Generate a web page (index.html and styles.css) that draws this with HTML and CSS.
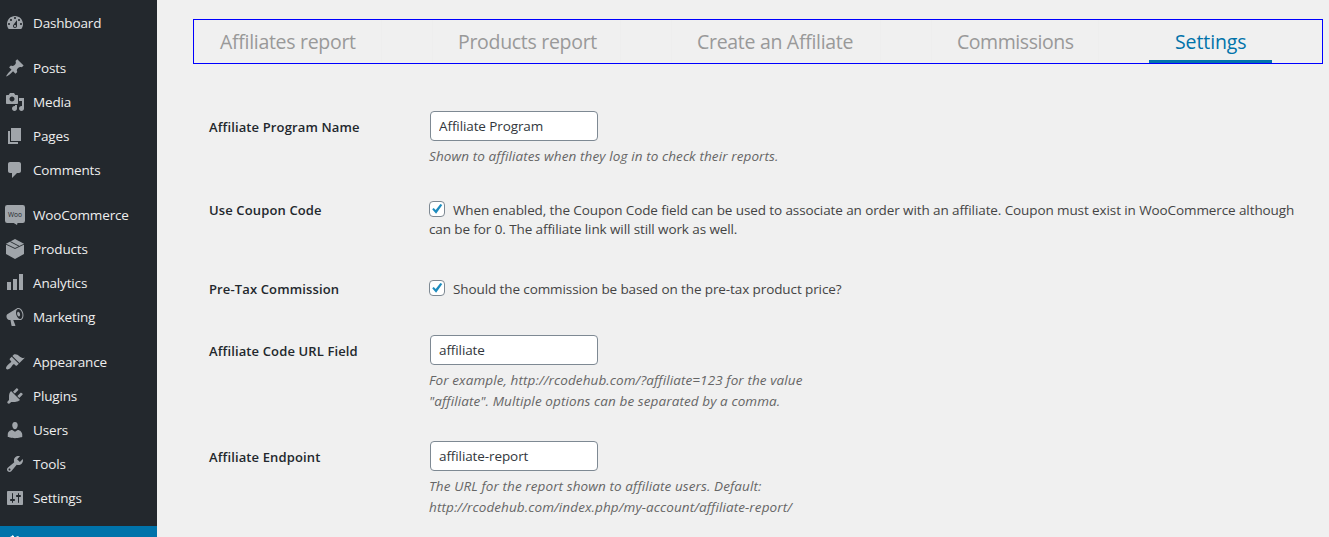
FILE: index.html
```
<!DOCTYPE html>
<html lang="en">
<head>
<meta charset="utf-8">
<title>Affiliate Settings</title>
<link rel="stylesheet" href="styles.css">
</head>
<body>
<div class="layout">
  <nav class="sidebar">
    <ul class="menu">
      <li class="item"><svg class="icon" viewBox="0 0 20 20"><path fill-rule="evenodd" d="M3.76 16h12.48c1.1-1.37 1.76-3.11 1.76-5 0-4.42-3.58-8-8-8s-8 3.58-8 8c0 1.89.66 3.63 1.76 5zM10 4c.55 0 1 .45 1 1s-.45 1-1 1-1-.45-1-1 .45-1 1-1zM6 6c.55 0 1 .45 1 1s-.45 1-1 1-1-.45-1-1 .45-1 1-1zm8 0c.55 0 1 .45 1 1s-.45 1-1 1-1-.45-1-1 .45-1 1-1zm-5.37 5.55L12 7v6c0 1.1-.9 2-2 2s-2-.9-2-2c0-.57.24-1.08.63-1.45zM4 10c.55 0 1 .45 1 1s-.45 1-1 1-1-.45-1-1 .45-1 1-1zm12 0c.55 0 1 .45 1 1s-.45 1-1 1-1-.45-1-1 .45-1 1-1zm-5 3c0-.55-.45-1-1-1s-1 .45-1 1 .45 1 1 1 1-.45 1-1z"/></svg><span>Dashboard</span></li>
    </ul>
    <ul class="menu">
      <li class="item"><svg class="icon" viewBox="0 0 20 20"><path d="M10.44 3.02l1.82-1.82 6.36 6.35-1.83 1.82c-1.05-.68-2.48-.57-3.41.36l-.75.75c-.92.93-1.04 2.35-.35 3.41l-1.83 1.82-2.41-2.41-2.8 2.79c-.42.42-3.38 2.71-3.8 2.29s1.86-3.39 2.28-3.81l2.79-2.79L4.1 9.36l1.83-1.82c1.05.69 2.48.57 3.4-.36l.75-.75c.93-.92 1.05-2.35.36-3.41z"/></svg><span>Posts</span></li>
      <li class="item"><svg class="icon" viewBox="0 0 20 20"><path fill-rule="evenodd" d="M13 11V4c0-.55-.45-1-1-1h-1.67L9 1H5L3.67 3H2c-.55 0-1 .45-1 1v7c0 .55.45 1 1 1h10c.55 0 1-.45 1-1zM7 4.5c1.38 0 2.5 1.12 2.5 2.5S8.38 9.5 7 9.5 4.5 8.38 4.5 7 5.62 4.5 7 4.5zM14 6h5v10.5c0 1.38-1.12 2.5-2.5 2.5S14 17.88 14 16.5s1.12-2.5 2.5-2.5c.17 0 .34.02.5.05V9h-3V6zm-4 8.05V13h2v3.5c0 1.38-1.12 2.5-2.5 2.5S7 17.88 7 16.5 8.12 14 9.5 14c.17 0 .34.02.5.05z"/></svg><span>Media</span></li>
      <li class="item"><svg class="icon" viewBox="0 0 20 20"><path d="M6 15V2h10v13H6zm-1 1h8v2H3V5h2v11z"/></svg><span>Pages</span></li>
      <li class="item"><svg class="icon" viewBox="0 0 20 20"><path d="M5 2h9c1.1 0 2 .9 2 2v7c0 1.1-.9 2-2 2h-2l-5 5v-5H5c-1.1 0-2-.9-2-2V4c0-1.1.9-2 2-2z"/></svg><span>Comments</span></li>
    </ul>
    <ul class="menu">
      <li class="item"><svg class="icon" viewBox="0 0 20 20"><path d="M2.200 0h15.600Q20 0 20 2.200v13.600Q20 18 17.800 18H12.500l-.5 2L8.700 18H2.200Q0 18 0 15.800V2.200Q0 0 2.200 0z"/><text class="woo" x="10" y="11.500" text-anchor="middle" textLength="14" lengthAdjust="spacingAndGlyphs">Woo</text></svg><span>WooCommerce</span></li>
      <li class="item"><svg class="icon" viewBox="0 0 20 20"><path d="M10 0l9 4.700v10.300L10 20l-9-5V4.700z"/><path class="cut" d="M1 5.200l9 4.300 9-4.300M5.300 2.600l8.800 4.600"/></svg><span>Products</span></li>
      <li class="item"><svg class="icon" viewBox="0 0 20 20"><path d="M18 17V1h-4v16h4zm-6 0V6H8v11h4zm-6 0V9H2v8h4z"/></svg><span>Analytics</span></li>
      <li class="item"><svg class="icon" viewBox="0 0 20 20"><path fill-rule="evenodd" d="M18.150 5.940c.46 1.620.38 3.220-.02 4.480-.42 1.280-1.260 2.180-2.300 2.480-.16.06-.26.06-.4.06-.06.02-.12.02-.18.02-.06.02-.14.02-.22.02h-6.800l2.220 5.500c.02.14-.06.26-.14.34-.08.1-.24.16-.34.16H6.950c-.1 0-.26-.06-.34-.16-.08-.08-.16-.2-.14-.34l-1-5.500H4.250l-.02-.02c-.5.06-1.080-.18-1.540-.62s-.88-1.080-1.060-1.880c-.24-.8-.2-1.560-.02-2.200.18-.62.58-1.080 1.060-1.300l.02-.02 9-5.400c.1-.06.18-.1.24-.16.06-.04.14-.08.24-.12.16-.08.28-.12.5-.18 1.040-.3 2.240.1 3.220.98s1.840 2.240 2.260 3.860zm-2.580 5.980h-.02c.4-.1.74-.34 1.040-.7.58-.7.86-1.760.86-3.040 0-.64-.1-1.300-.28-1.980-.34-1.360-1.020-2.500-1.780-3.240s-1.680-1.100-2.460-.88c-.82.22-1.400.96-1.700 2-.32 1.040-.28 2.360.06 3.720.38 1.360 1 2.500 1.800 3.240.78.74 1.620 1.100 2.480.88zm-2.540-7.080c.22-.04.42-.02.62.04.38.16.76.48 1.020 1s.42 1.200.42 1.780c0 .3-.04.56-.12.8-.18.48-.44.84-.86.94-.34.1-.8-.06-1.140-.4s-.64-.86-.78-1.500c-.18-.62-.12-1.240.02-1.720s.48-.84.82-.94z"/></svg><span>Marketing</span></li>
    </ul>
    <ul class="menu">
      <li class="item"><svg class="icon" viewBox="0 0 20 20"><path d="M14.480 11.060L7.410 3.990l1.500-1.500c.5-.56 2.300-.47 3.510.32 1.210.8 1.430 1.280 2.910 2.100 1.180.64 2.450 1.260 4.450.85zm-.71.71L6.700 4.700 4.930 6.470c-.39.39-.39 1.020 0 1.410l1.060 1.060c.39.39.39 1.030 0 1.420-.6.6-1.430 1.110-2.210 1.690-.35.26-.7.53-1.010.84C1.430 14.230.4 16.080 1.400 17.070c.99 1 2.840-.03 4.180-1.360.31-.31.58-.66.85-1.020.57-.78 1.080-1.610 1.690-2.210.39-.39 1.020-.39 1.410 0l1.060 1.060c.39.39 1.020.39 1.410 0z"/></svg><span>Appearance</span></li>
      <li class="item"><svg class="icon" viewBox="0 0 20 20"><path d="M13.110 4.360L9.870 7.600 8 5.730l3.240-3.240c.35-.34 1.050-.2 1.560.32.52.51.66 1.210.31 1.550zm-8 1.770l.91-1.120 9.010 9.010-1.190.84c-.71.71-2.630 1.160-3.820 1.160H6.140L4.900 17.260c-.59.59-1.540.59-2.120 0-.59-.58-.59-1.530 0-2.120l1.240-1.240v-3.880c0-1.130.4-3.190 1.090-3.890zm7.260 3.970l3.240-3.240c.34-.35 1.040-.21 1.550.31.52.51.66 1.210.31 1.550l-3.240 3.250z"/></svg><span>Plugins</span></li>
      <li class="item"><svg class="icon" viewBox="0 0 20 20"><path d="M10 9.250c-2.270 0-2.730-3.440-2.730-3.440C7 4.020 7.820 2 9.970 2c2.160 0 2.980 2.020 2.710 3.810 0 0-.41 3.440-2.680 3.440zm0 2.570L12.720 10c2.390 0 4.520 2.330 4.520 4.530v2.490s-3.650 1.130-7.240 1.130c-3.650 0-7.240-1.130-7.240-1.130v-2.490c0-2.250 1.940-4.480 4.470-4.480z"/></svg><span>Users</span></li>
      <li class="item"><svg class="icon" viewBox="0 0 20 20"><path fill-rule="evenodd" d="M16.680 9.770c-1.340 1.340-3.300 1.670-4.950.99l-5.410 6.520c-.99.99-2.590.99-3.580 0s-.99-2.590 0-3.570l6.520-5.420c-.68-1.650-.35-3.610.99-4.950 1.280-1.280 3.120-1.620 4.720-1.060l-2.890 2.890 2.820 2.820 2.860-2.870c.53 1.580.18 3.390-1.080 4.650zM3.810 16.210c.4.39 1.040.39 1.430 0 .4-.4.4-1.040 0-1.430-.39-.4-1.030-.4-1.430 0-.39.39-.39 1.030 0 1.430z"/></svg><span>Tools</span></li>
      <li class="item"><svg class="icon" viewBox="0 0 20 20"><path fill-rule="evenodd" d="M18 16V4c0-.55-.45-1-1-1H3c-.55 0-1 .45-1 1v12c0 .55.45 1 1 1h14c.55 0 1-.45 1-1zM8 11h1c.55 0 1 .45 1 1s-.45 1-1 1H8v1.500c0 .28-.22.5-.5.5s-.5-.22-.5-.5V13H6c-.55 0-1-.45-1-1s.45-1 1-1h1V5.500c0-.28.22-.5.5-.5s.5.22.5.5V11zm5-2h-1c-.55 0-1-.45-1-1s.45-1 1-1h1V5.500c0-.28.22-.5.5-.5s.5.22.5.5V7h1c.55 0 1 .45 1 1s-.45 1-1 1h-1v5.500c0 .28-.22.5-.5.5s-.5-.22-.5-.5V9z"/></svg><span>Settings</span></li>
    </ul>
    <div class="active"><svg class="icon" viewBox="0 0 20 20"><path d="M5 5l.8-1.700h1l.7-1.300 1.500 1.300V5zM11.500 5V3.200h2.200V5z"/></svg></div>
  </nav>
  <main class="content">
    <div class="tabs">
      <a class="tab t1"><span>Affiliates report</span></a>
      <a class="tab t2"><span>Products report</span></a>
      <a class="tab t3"><span>Create an Affiliate</span></a>
      <a class="tab t4"><span>Commissions</span></a>
      <a class="tab t5 current"><span>Settings</span></a>
    </div>
    <form class="settings">
      <div class="row name">
        <label class="label">Affiliate Program Name</label>
        <div class="field"><input class="input" type="text" value="Affiliate Program"><p class="help">Shown to affiliates when they log in to check their reports.</p></div>
      </div>
      <div class="row coupon">
        <label class="label">Use Coupon Code</label>
        <div class="field check-text"><div class="check-line"><svg class="checkbox" viewBox="0 0 16 16"><rect x=".5" y=".5" width="15" height="15" rx="3.500"/><path d="M3.200 8.200l1.500-1.300 2 2.200 4.700-6 1.900.9-6.200 8.700z"/></svg><span>When enabled, the Coupon Code field can be used to associate an order with an affiliate. Coupon must exist in WooCommerce although</span></div><div>can be for 0. The affiliate link will still work as well.</div></div>
      </div>
      <div class="row tax">
        <label class="label">Pre-Tax Commission</label>
        <div class="field check-text"><div class="check-line"><svg class="checkbox" viewBox="0 0 16 16"><rect x=".5" y=".5" width="15" height="15" rx="3.500"/><path d="M3.200 8.200l1.500-1.300 2 2.200 4.700-6 1.900.9-6.200 8.700z"/></svg><span>Should the commission be based on the pre-tax product price?</span></div></div>
      </div>
      <div class="row url">
        <label class="label">Affiliate Code URL Field</label>
        <div class="field"><input class="input" type="text" value="affiliate"><p class="help">For example, http://rcodehub.com/?affiliate=123 for the value<br>"affiliate". Multiple options can be separated by a comma.</p></div>
      </div>
      <div class="row endpoint">
        <label class="label">Affiliate Endpoint</label>
        <div class="field"><input class="input" type="text" value="affiliate-report"><p class="help">The URL for the report shown to affiliate users. Default:<br>http://rcodehub.com/index.php/my-account/affiliate-report/</p></div>
      </div>
    </form>
  </main>
</div>
</body>
</html>
```
FILE: styles.css
```
* { box-sizing: border-box; }
body {
  margin: 0;
  height: 537px;
  overflow: hidden;
  background: #f0f0f0;
  color: #444;
  font: 13.500px/20px "Open Sans", "Noto Sans", sans-serif;
}
.layout { display: flex; height: 537px; }
.sidebar {
  flex: none;
  width: 157px;
  padding-top: 6px;
  background: #23282d;
  color: #eee;
  overflow: hidden;
}
.menu { list-style: none; margin: 0 0 11px; padding: 0; }
.item { display: flex; align-items: center; gap: 8px; height: 34px; padding-left: 5px; letter-spacing: -.16px; }
.icon { flex: none; width: 20px; height: 20px; fill: #a0a5aa; overflow: visible; }
.woo { font: 8px "Open Sans", sans-serif; fill: #23282d; letter-spacing: 0; }
.cut { fill: none; stroke: #23282d; stroke-width: .9; }
.active { height: 34px; padding: 7px 5px; background: #0073aa; }
.active .icon { display: block; fill: #fff; }
.content { flex: 1; padding: 19px 6px 0 36px; }
.tabs { display: flex; gap: 50px; height: 45px; border: 1px solid #00f; }
.tab {
  flex: none;
  height: 43px;
  padding: 0 25px;
  border: solid #eee;
  border-width: 0 1px;
  font-size: 19.500px;
  line-height: 43px;
  letter-spacing: -.3px;
  color: #999;
  white-space: nowrap;
}
.t1 { width: 188px; }
.t2 { width: 189px; }
.t3 { width: 210px; }
.t4 { width: 168px; letter-spacing: -.45px; }
.t5 { width: 123px; letter-spacing: -.1px; }
.current {
  color: #0073aa;
  background: linear-gradient(#0073aa, #0073aa) bottom / 100% 3px no-repeat border-box;
  border-color: transparent;
}
.settings { padding: 47px 0 0 16px; }
.row { display: grid; grid-template-columns: 220px 1fr; }
.name { height: 89px; }
.coupon { height: 79px; }
.tax { height: 56px; }
.url { height: 106px; }
.label { padding-top: 6px; font-weight: 600; color: #23282d; font-size: 13px; letter-spacing: .13px; white-space: nowrap; }
.coupon .label, .tax .label { padding-top: 0; }
.input {
  display: block;
  width: 168px;
  height: 30px;
  margin: 0 0 0 1px;
  padding: 0 8px;
  border: 1px solid #7e8993;
  border-radius: 4px;
  background: #fff;
  color: #32373c;
  font: 13.500px "Open Sans", "Noto Sans", sans-serif;
  letter-spacing: -.1px;
}
.help { margin: 5px 0 0; color: #666; font-style: italic; line-height: 21px; letter-spacing: .1px; white-space: nowrap; }
.check-text { padding-top: 1px; line-height: 19px; letter-spacing: -.1px; white-space: nowrap; }
.check-line { display: flex; gap: 8px; height: 19px; }
.checkbox { flex: none; width: 16px; height: 16px; fill: #1e8cbe; }
.checkbox rect { fill: #fff; stroke: #7e8993; }
```
